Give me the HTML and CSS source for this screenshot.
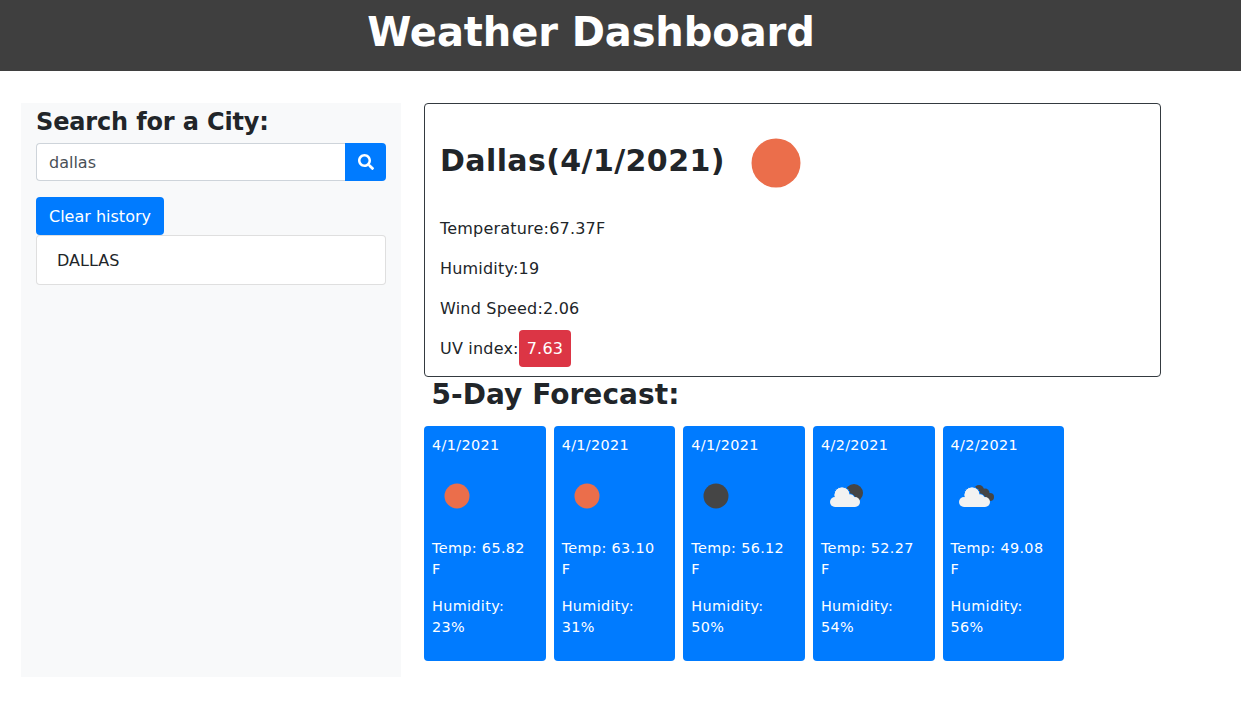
FILE: index.html
```html
<!DOCTYPE html>
<html>

<head>
    <title>Weather Dashboard</title>
    <link rel="stylesheet" href="styles.css">
</head>

<body>

    <header class="top-bar">
        <h1>Weather Dashboard</h1>
    </header>

    <div class="page">
        <!-- Search column -->
        <aside class="sidebar">
            <h3 class="search-title">Search for a City:</h3>
            <div class="search-group">
                <input type="text" class="search-input" value="dallas">
                <button class="search-btn">
                    <svg viewBox="0 0 512 512" width="16" height="16">
                        <path fill="#fff" d="M505 442.7L405.3 343c-4.5-4.5-10.6-7-17-7H372c27.6-35.3 44-79.7 44-128C416 93.1 322.9 0 208 0S0 93.1 0 208s93.1 208 208 208c48.3 0 92.7-16.4 128-44v16.3c0 6.4 2.5 12.5 7 17l99.7 99.7c9.4 9.4 24.6 9.4 33.9 0l28.3-28.3c9.4-9.4 9.4-24.6.1-34zM208 336c-70.7 0-128-57.2-128-128 0-70.7 57.2-128 128-128 70.7 0 128 57.2 128 128 0 70.7-57.2 128-128 128z"/>
                    </svg>
                </button>
            </div>
            <button class="clear-btn">Clear history</button>
            <ul class="history">
                <li>DALLAS</li>
            </ul>
        </aside>

        <main class="content">
            <!-- Current weather -->
            <section class="current">
                <div class="current-head">
                    <h2>Dallas(4/1/2021)</h2>
                    <svg class="current-icon" viewBox="0 0 50 50" width="50" height="50">
                        <circle cx="25" cy="25" r="24.5" fill="#eb6e4b"/>
                    </svg>
                </div>
                <p>Temperature:67.37F</p>
                <p>Humidity:19</p>
                <p>Wind Speed:2.06</p>
                <p>UV index:<span class="uv-badge">7.63</span></p>
            </section>

            <h3 class="forecast-title">5-Day Forecast:</h3>

            <div class="forecast">
                <div class="day">
                    <p>4/1/2021</p>
                    <svg class="day-icon" viewBox="0 0 50 50" width="50" height="50">
                        <circle cx="25" cy="25" r="12.5" fill="#eb6e4b"/>
                    </svg>
                    <p>Temp: 65.82 F</p>
                    <p>Humidity: 23%</p>
                </div>
                <div class="day">
                    <p>4/1/2021</p>
                    <svg class="day-icon" viewBox="0 0 50 50" width="50" height="50">
                        <circle cx="25" cy="25" r="12.5" fill="#eb6e4b"/>
                    </svg>
                    <p>Temp: 63.10 F</p>
                    <p>Humidity: 31%</p>
                </div>
                <div class="day">
                    <p>4/1/2021</p>
                    <svg class="day-icon" viewBox="0 0 50 50" width="50" height="50">
                        <circle cx="25" cy="25" r="12.5" fill="#454545"/>
                    </svg>
                    <p>Temp: 56.12 F</p>
                    <p>Humidity: 50%</p>
                </div>
                <div class="day">
                    <p>4/2/2021</p>
                    <svg class="day-icon" viewBox="0 0 50 50" width="50" height="50">
                        <circle cx="33" cy="22" r="9" fill="#454545"/>
                        <g fill="#f2f2f2" stroke="#007bff" stroke-width="1">
                            <circle cx="21" cy="24" r="8"/>
                            <circle cx="29" cy="28" r="5"/>
                        </g>
                        <g fill="#f2f2f2">
                            <circle cx="14" cy="31" r="5"/>
                            <circle cx="34" cy="31" r="5"/>
                            <circle cx="21" cy="24" r="7.5"/>
                            <circle cx="29" cy="28" r="4.5"/>
                            <rect x="14" y="28" width="20" height="8"/>
                        </g>
                    </svg>
                    <p>Temp: 52.27 F</p>
                    <p>Humidity: 54%</p>
                </div>
                <div class="day">
                    <p>4/2/2021</p>
                    <svg class="day-icon" viewBox="0 0 50 50" width="50" height="50">
                        <g fill="#454545">
                            <circle cx="28" cy="19" r="5"/>
                            <circle cx="34" cy="22" r="4.5"/>
                            <circle cx="39" cy="26" r="4"/>
                            <rect x="26" y="20" width="12" height="10"/>
                        </g>
                        <g fill="#f2f2f2" stroke="#007bff" stroke-width="1">
                            <circle cx="21" cy="24" r="8"/>
                            <circle cx="29" cy="28" r="5"/>
                        </g>
                        <g fill="#f2f2f2">
                            <circle cx="13" cy="31" r="5"/>
                            <circle cx="34" cy="31" r="5"/>
                            <circle cx="21" cy="24" r="7.5"/>
                            <circle cx="29" cy="28" r="4.5"/>
                            <rect x="13" y="28" width="21" height="8"/>
                        </g>
                    </svg>
                    <p>Temp: 49.08 F</p>
                    <p>Humidity: 56%</p>
                </div>
            </div>
        </main>
    </div>

</body>

</html>
```

FILE: styles.css
```css
* {
    box-sizing: border-box;
}

body {
    margin: 0;
    font-family: "DejaVu Sans", Verdana, sans-serif;
    font-size: 16px;
    line-height: 1.5;
    color: #212529;
    background-color: #fff;
}

h1,
h2,
h3,
p,
ul {
    margin: 0;
    padding: 0;
}

h1,
h2,
h3 {
    font-weight: 700;
    line-height: 1.2;
}

.top-bar {
    height: 71px;
    padding-right: 59px;
    background-color: #3f3f3f;
    color: #fff;
    text-align: center;
}

.top-bar h1 {
    font-size: 40px;
    line-height: 64px;
    letter-spacing: -0.1px;
}

.page {
    display: flex;
    gap: 23px;
    margin-top: 32px;
    padding-left: 21px;
}

/* Search column */
.sidebar {
    width: 380px;
    height: 574px;
    padding: 5px 15px 0;
    background-color: #f8f9fa;
}

.search-title {
    margin-bottom: 6px;
    font-size: 24px;
    letter-spacing: -0.15px;
}

.search-group {
    display: flex;
    height: 38px;
    margin-bottom: 16px;
}

.search-input {
    flex: 1;
    min-width: 0;
    padding: 7px 12px 5px;
    font: inherit;
    color: #495057;
    border: 1px solid #ced4da;
    border-right: none;
    border-radius: 4px 0 0 4px;
}

.search-btn {
    display: flex;
    align-items: center;
    justify-content: center;
    width: 41px;
    padding: 0;
    background-color: #007bff;
    border: none;
    border-radius: 0 4px 4px 0;
}

.clear-btn {
    display: block;
    height: 38px;
    padding: 7px 13px 5px;
    font: inherit;
    color: #fff;
    background-color: #007bff;
    border: none;
    border-radius: 4px;
}

.history {
    list-style: none;
    padding: 13px 20px 11px;
    background-color: #fff;
    border: 1px solid rgba(0, 0, 0, .125);
    border-radius: 4px;
}

/* Current weather */
.content {
    width: 737px;
}

.current {
    height: 274px;
    padding: 0 15px;
    border: 1px solid #343a40;
    border-radius: 4px;
}

.current-head {
    display: flex;
    align-items: center;
    gap: 26px;
    height: 113px;
}

.current-head h2 {
    font-size: 30px;
    letter-spacing: 0.4px;
}

.current-icon {
    margin-top: 4px;
}

.current p {
    margin-bottom: 16px;
    letter-spacing: 0.2px;
}

.uv-badge {
    padding: 9px 8px;
    color: #fff;
    background-color: #dc3545;
    border-radius: 4px;
}

.forecast-title {
    margin: 1px 0 14px 7.5px;
    font-size: 28px;
    letter-spacing: 0.05px;
}

/* Forecast cards */
.forecast {
    display: flex;
    gap: 8px;
}

.day {
    width: 121.65px;
    height: 235px;
    padding: 9px 8px 8px;
    font-size: 14.4px;
    line-height: 21px;
    letter-spacing: 0.35px;
    color: #fff;
    background-color: #007bff;
    border-radius: 4px;
}

.day p {
    margin-bottom: 16px;
}

.day-icon {
    display: block;
    margin: -1px 0 17px;
}
```
